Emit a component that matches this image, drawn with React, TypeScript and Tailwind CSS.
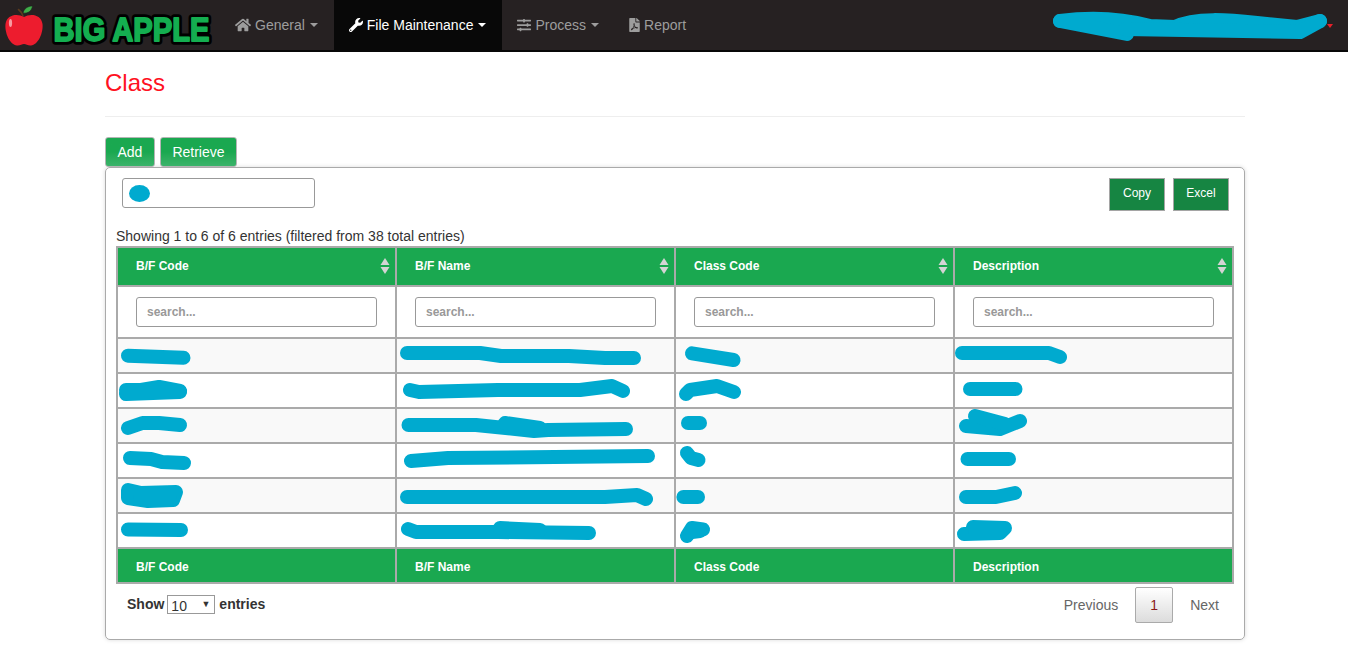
import React from 'react';
import { FaHome, FaWrench, FaSlidersH, FaFilePdf } from 'react-icons/fa';

const columns = ['B/F Code', 'B/F Name', 'Class Code', 'Description'];
const colX = [118, 397, 676, 955];

// scribbles over the hidden data, in page coordinates: [row][col] -> stroke paths
const scribbles: string[][][] = [
    [
        ['M128 355.7L183.5 357.7'],
        ['M407 353L480 353L501 356L569 356L605 358L634 358'],
        ['M692 353.3L733.6 360'],
        ['M962 353L1049 353L1060 357'],
    ],
    [
        ['M126 390L141 390L159 387L180 391', 'M126 394L180 392'],
        ['M410 390L419 392L498 390L580 390L612 386L623 391'],
        ['M686 394L690 390L717 386L734 392'],
        ['M970 389L1015.5 389'],
    ],
    [
        ['M128 428L142.5 423L159 423L180 425'],
        ['M408.5 425L476 425L534 431L548 430L626 429', 'M505 423L540 428'],
        ['M688 423L700 423'],
        ['M966 426L1000 429L1020 421', 'M975 416L1005 424'],
    ],
    [
        ['M130 458L151 459L162 462L184 463'],
        ['M411 461L448 458L648 456'],
        ['M687 453L691 458L698.5 460'],
        ['M967.5 459L1009 459'],
    ],
    [
        ['M128 490L141 493L176 492L173 500L148 501L128 498Z', 'M140 496L170 496'],
        ['M407 497L605 497L637 495L646 499'],
        ['M683.4 497L698 497'],
        ['M966 497L996 497L1015 493'],
    ],
    [
        ['M128 529.5L181 530'],
        ['M408 529L416 532L498 532L589 533', 'M500 528L540 530'],
        ['M687 536L692 528L703 529.5', 'M692 532L700 531'],
        ['M964 534L1000 533L1005 528L973 527', 'M975 531L1000 531'],
    ],
];

const Caret = () => (
    <span className="inline-block w-0 h-0 ml-[5px] mr-px align-middle border-x-[4px] border-x-transparent border-t-[4px] border-t-current" />
);

const SortIcon = () => (
    <svg viewBox="0 0 10 16" className="absolute right-[5px] top-[10px] w-[10px] h-[16px]">
        <polygon points="5 0 9.5 7 0.5 7" fill="#d4d4d4" />
        <polygon points="5 16 9.5 9 0.5 9" fill="#d4d4d4" />
    </svg>
);

const Apple = () => (
    <svg viewBox="0 0 40 42" className="w-[40px] h-[42px] shrink-0">
        <path d="M19 12C18 9 16.5 7 14.5 5.5" fill="none" stroke="#5b3a1e" strokeWidth="1.6" strokeLinecap="round" />
        <path d="M19 9C20 4.5 24 2 28.5 2C28 6.5 24 10 19 9Z" fill="#3fae49" stroke="#1d1d1d" strokeWidth="0.6" />
        <path d="M20 13C14 9.5 3 10 1.5 20C0.5 29 6 41 13 41.5C16 41.8 18 40 20 40C22 40 24 41.8 27 41.5C34 41 39.5 29 38.5 20C37 10 26 9.5 20 13Z" fill="#ed1c2e" />
        <ellipse cx="6.5" cy="19" rx="1.6" ry="4" fill="#f79aa0" />
    </svg>
);

const Logo = () => (
    <div className="flex items-center pl-[4px] w-[220px] h-[50px] shrink-0">
        <Apple />
        <svg viewBox="0 0 168 40" className="ml-[4px] w-[168px] h-[40px] shrink-0 overflow-visible font-['Liberation_Sans',Arial,sans-serif] font-bold text-[30px]">
            <g transform="scale(1 1.1)">
                <text aria-hidden="true" x="5.5" y="32.3" textLength="156" lengthAdjust="spacingAndGlyphs" fill="#000" stroke="#000" strokeWidth="7" strokeLinejoin="round">BIG APPLE</text>
                <text x="5.5" y="32.3" textLength="156" lengthAdjust="spacingAndGlyphs" fill="#14ae50" stroke="#14ae50" strokeWidth="1.6" strokeLinejoin="round">BIG APPLE</text>
            </g>
        </svg>
    </div>
);

const NavItem = ({ icon, label, caret, active }: { icon: React.ReactNode; label: string; caret?: boolean; active?: boolean }) => (
    <a className={`flex items-center h-[50px] px-[15px] text-sm ${active ? 'bg-[#080808] text-white' : 'text-[#9d9d9d]'}`}>
        {icon}
        <span className="ml-[4px]">{label}</span>
        {caret && <Caret />}
    </a>
);

const Navbar = () => (
    <nav className="flex h-[52px] bg-[#262122] border-b-2 border-[#080808]">
        <Logo />
        <NavItem icon={<FaHome className="w-4 h-4" />} label="General" caret />
        <NavItem icon={<FaWrench className="w-[14px] h-[14px]" />} label="File Maintenance" caret active />
        <NavItem icon={<FaSlidersH className="w-[14px] h-[14px]" />} label="Process" caret />
        <NavItem icon={<FaFilePdf className="-ml-px w-[11px] h-[14px]" />} label="Report" />
        <div className="ml-auto flex items-center pr-[15px]">
            <svg viewBox="1052 0 276 50" className="w-[276px] h-[50px]" fill="none" stroke="#00aacf" strokeWidth="14" strokeLinecap="round" strokeLinejoin="round">
                <path d="M1060 21C1090 17 1120 18 1150 26L1175 27C1195 17 1230 20 1257 23L1297 27L1320 21" />
                <path d="M1060 21L1127 34" />
                <path d="M1125 29L1300 32L1320 21" />
            </svg>
            <span className="w-0 h-0 mt-[1px] ml-[-1px] border-x-[3px] border-x-transparent border-t-[4px] border-t-[#e8202a]" />
        </div>
    </nav>
);

const GreenButton = ({ label }: { label: string }) => (
    <button className="h-[30px] px-[11.5px] text-sm text-white rounded-[3px] border border-[#b5b5b5] bg-gradient-to-b from-[#1aa850] via-[#1aa850] to-[#3ab36a]">
        {label}
    </button>
);

const ExportButton = ({ label }: { label: string }) => (
    <button className="w-[56px] h-[33px] pb-[3px] text-xs font-normal text-white bg-[#168542] border border-[#a5a5a5]">
        {label}
    </button>
);

const DataRow = ({ row }: { row: number }) => (
    <tr className={row % 2 === 0 ? 'bg-[#f9f9f9]' : 'bg-white'}>
        {columns.map((col, i) => (
            <td key={col} className="relative h-[35px] border-2 border-[#aaaaaa] p-0">
                <svg
                    viewBox={`${colX[i]} ${339 + row * 35} 277 33`}
                    className="absolute left-0 top-0 w-[277px] h-[33px] overflow-visible z-10"
                    fill="none"
                    stroke="#00aacf"
                    strokeWidth="14"
                    strokeLinecap="round"
                    strokeLinejoin="round"
                >
                    {scribbles[row][i].map((d) => (
                        <path key={d} d={d} />
                    ))}
                </svg>
            </td>
        ))}
    </tr>
);

const ClassTable = () => (
    <table className="w-[1118px] table-fixed border-collapse">
        <thead>
            <tr className="bg-[#1aa850]">
                {columns.map((col) => (
                    <th key={col} className="relative h-[39px] border-2 border-[#aaaaaa] pl-[18px] pb-[2px] text-left text-xs font-bold text-white">
                        {col}
                        <SortIcon />
                    </th>
                ))}
            </tr>
            <tr className="bg-white">
                {columns.map((col) => (
                    <td key={col} className="h-[52px] border-2 border-[#aaaaaa] px-[18px]">
                        <input
                            placeholder="search..."
                            className="block w-full h-[30px] px-[10px] text-xs font-bold border border-[#999999] rounded-[3px] placeholder:text-[#999999]"
                        />
                    </td>
                ))}
            </tr>
        </thead>
        <tbody>
            {scribbles.map((_, row) => (
                <DataRow key={row} row={row} />
            ))}
        </tbody>
        <tfoot>
            <tr className="bg-[#1aa850]">
                {columns.map((col) => (
                    <th key={col} className="h-[35px] border-2 border-[#aaaaaa] pl-[18px] pt-[2px] text-left text-xs font-bold text-white">
                        {col}
                    </th>
                ))}
            </tr>
        </tfoot>
    </table>
);

const Panel = () => (
    <div className="h-[473px] border border-[#aaaaaa] rounded-[5px] shadow-[0_0_4px_rgba(0,0,0,0.15)] px-[10px] pt-[10px]">
        <div className="flex items-start justify-between pl-[6px] pr-[5px]">
            <div className="relative w-[193px] h-[30px] border border-[#999999] rounded-[3px]">
                <span className="absolute left-[6px] top-[6px] w-[21px] h-[17px] rounded-[50%] bg-[#00aacf]" />
            </div>
            <div className="flex gap-2">
                <ExportButton label="Copy" />
                <ExportButton label="Excel" />
            </div>
        </div>
        <div className="mt-[15px] h-[20px] text-sm leading-5 text-[#333333]">
            Showing 1 to 6 of 6 entries (filtered from 38 total entries)
        </div>
        <ClassTable />
        <div className="flex items-start justify-between mt-[3px] pl-[11px] pr-px">
            <div className="flex items-center mt-[7px] text-sm font-bold text-[#333333]">
                Show
                <div className="relative ml-[3px] mr-[4px]">
                    <select defaultValue="10" className="block appearance-none w-[48px] h-[19px] pl-[3px] text-sm font-normal bg-white border border-[#999999]">
                        <option value="10">10</option>
                        <option value="25">25</option>
                        <option value="50">50</option>
                    </select>
                    <span className="absolute right-[5px] top-[4px] text-[9px] leading-[10px] font-normal text-[#333333]">▼</span>
                </div>
                entries
            </div>
            <div className="flex items-center gap-[3px] text-sm text-[#666666]">
                <a className="px-[14px]">Previous</a>
                <a className="flex items-center justify-center w-[38px] h-[36px] text-[#8b1a1a] border border-[#aaaaaa] rounded-[2px] bg-gradient-to-b from-white to-[#dcdcdc]">1</a>
                <a className="px-[14px]">Next</a>
            </div>
        </div>
    </div>
);

const App = () => (
    <div className="min-h-[655px] bg-white font-['Liberation_Sans',Arial,sans-serif]">
        <Navbar />
        <main className="w-[1140px] ml-[105px]">
            <h1 className="mt-[18px] text-2xl leading-[26px] text-[#ff1122]">Class</h1>
            <hr className="mt-[20px] border-t border-[#eeeeee]" />
            <div className="flex gap-[5px] mt-[20px]">
                <GreenButton label="Add" />
                <GreenButton label="Retrieve" />
            </div>
            <Panel />
        </main>
    </div>
);

export default App;
